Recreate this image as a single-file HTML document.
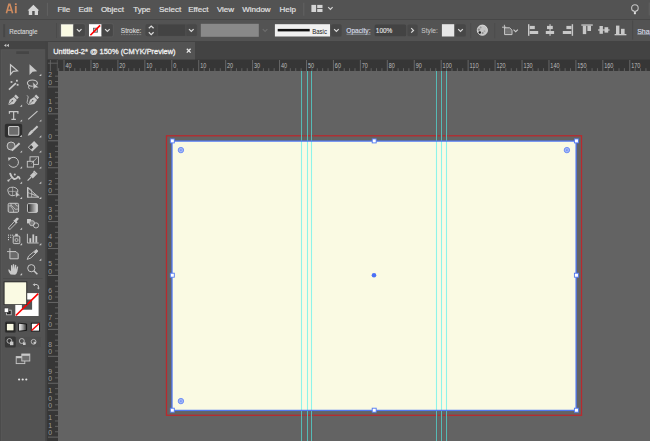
<!DOCTYPE html>
<html><head><meta charset="utf-8">
<style>
*{margin:0;padding:0}
html,body{width:650px;height:441px;overflow:hidden;background:#636363}
svg{position:absolute;left:0;top:0;display:block}
text{font-family:"Liberation Sans", sans-serif}
</style></head><body>
<svg width="650" height="441" viewBox="0 0 650 441">
<rect x="0" y="0" width="650" height="441" fill="#434343"/>
<rect x="0" y="0" width="650" height="19" fill="#535353"/>
<rect x="0" y="19" width="650" height="1" fill="#474747"/>
<rect x="0" y="20" width="650" height="21" fill="#535353"/>
<rect x="48" y="42" width="147" height="18" fill="#535353"/>
<rect x="0" y="41" width="45.6" height="8" fill="#444444"/>
<rect x="0" y="49" width="45.5" height="392" fill="#4a4a4a"/>
<rect x="1" y="49.5" width="44" height="391.5" fill="#535353"/>
<path d="M1.3,441 L1.3,49.8 L44.7,49.8" fill="none" stroke="#5a5a5a" stroke-width="0.6"/>
<rect x="48" y="59.6" width="602" height="11.4" fill="#363636"/>
<rect x="47.2" y="59.6" width="10.8" height="381.4" fill="#363636"/>
<rect x="58" y="71" width="592" height="370" fill="#636363"/>
<g fill="none" stroke="#d08c60" stroke-width="1.55" stroke-linejoin="miter"><path d="M6.4,13.2 L8.9,4.2 L9.9,4.2 L12.6,13.2"/><path d="M7.6,10.2 L11.5,10.2" stroke-width="1.4"/></g>
<rect x="14.9" y="6" width="1.8" height="7.2" fill="#d08c60"/>
<rect x="14.9" y="3.3" width="1.8" height="1.8" fill="#d08c60"/>
<path d="M33.4,4.8 L39.2,10.6 L38,10.6 L38,14.9 L34.7,14.9 L34.7,11 L32.2,11 L32.2,14.9 L28.8,14.9 L28.8,10.6 L27.6,10.6 Z" fill="#d6d6d6"/>
<rect x="46.9" y="2.8" width="1.1" height="13" fill="#606060"/>
<text x="57.4" y="12" font-size="8" fill="#e2e2e2" stroke="#e2e2e2" stroke-width="0.18">File</text>
<text x="78.4" y="12" font-size="8" fill="#e2e2e2" stroke="#e2e2e2" stroke-width="0.18">Edit</text>
<text x="100.9" y="12" font-size="8" fill="#e2e2e2" stroke="#e2e2e2" stroke-width="0.18">Object</text>
<text x="133.20000000000002" y="12" font-size="8" fill="#e2e2e2" stroke="#e2e2e2" stroke-width="0.18">Type</text>
<text x="158.9" y="12" font-size="8" fill="#e2e2e2" stroke="#e2e2e2" stroke-width="0.18">Select</text>
<text x="188.20000000000002" y="12" font-size="8" fill="#e2e2e2" stroke="#e2e2e2" stroke-width="0.18">Effect</text>
<text x="216.9" y="12" font-size="8" fill="#e2e2e2" stroke="#e2e2e2" stroke-width="0.18">View</text>
<text x="242.20000000000002" y="12" font-size="8" fill="#e2e2e2" stroke="#e2e2e2" stroke-width="0.18">Window</text>
<text x="279.59999999999997" y="12" font-size="8" fill="#e2e2e2" stroke="#e2e2e2" stroke-width="0.18">Help</text>
<rect x="303.2" y="2.8" width="1.1" height="13" fill="#606060"/>
<rect x="311.4" y="4.9" width="4.7" height="7.1" fill="#d4d4d4"/>
<rect x="317.2" y="4.9" width="5.3" height="3.1" fill="#d4d4d4"/>
<rect x="317.2" y="8.9" width="5.3" height="3.1" fill="#d4d4d4"/>
<path d="M328.2,7.2 L330.4,9.4 L332.6,7.2" fill="none" stroke="#d4d4d4" stroke-width="1.2"/>
<circle cx="634.9" cy="8" r="3.3" fill="none" stroke="#c4c4c4" stroke-width="1.1"/>
<path d="M633.4,10.6 L634.9,13.8 L636.4,10.6" fill="#535353" stroke="#535353" stroke-width="1"/>
<path d="M632.9,10.3 L634.9,12.2 L636.9,10.3" fill="none" stroke="#c4c4c4" stroke-width="1.1"/>
<rect x="633.9" y="12.2" width="2" height="2" fill="#e0e0e0"/>
<rect x="648.6" y="2.5" width="1.4" height="13" fill="#5c5c5c"/>
<rect x="3.2" y="24.2" width="1.9" height="12.9" fill="#474747"/>
<text x="9.2" y="33.7" font-size="7" fill="#d4d4d4" stroke="#d4d4d4" stroke-width="0.15" textLength="28.2" lengthAdjust="spacingAndGlyphs">Rectangle</text>
<rect x="56" y="23" width="0.8" height="15" fill="#4a4a4a"/>
<rect x="59.6" y="23.3" width="25.6" height="13.9" rx="2" fill="none" stroke="#5c5c5c" stroke-width="0.6"/>
<rect x="88.2" y="23.3" width="25.2" height="13.9" rx="2" fill="none" stroke="#5c5c5c" stroke-width="0.6"/>
<rect x="61.3" y="24.8" width="11.6" height="11.3" fill="#fafae3" stroke="#fdfdf2" stroke-width="0.8"/>
<rect x="73.6" y="24.3" width="11.2" height="12" rx="1.5" fill="#474747"/>
<path d="M76.9,29.1 L79.2,31.4 L81.5,29.1" fill="none" stroke="#dcdcdc" stroke-width="1.2"/>
<rect x="89" y="24.2" width="12.4" height="12.2" fill="#ffffff"/>
<rect x="93.5" y="28.2" width="4" height="4" fill="#c8c8c8" stroke="#5a5a5a" stroke-width="0.8"/>
<line x1="90.4" y1="35.3" x2="100.1" y2="25.4" stroke="#ff0000" stroke-width="1.6"/>
<rect x="101.9" y="24.2" width="10.9" height="12" rx="1.5" fill="#474747"/>
<path d="M105.1,29.1 L107.4,31.4 L109.7,29.1" fill="none" stroke="#dcdcdc" stroke-width="1.2"/>
<text x="120.8" y="33.4" font-size="7" fill="#d8d8d8" stroke="#d8d8d8" stroke-width="0.15" textLength="20.6" lengthAdjust="spacingAndGlyphs">Stroke:</text>
<line x1="121" y1="34.6" x2="141.5" y2="34.6" stroke="#a0a0a0" stroke-width="0.7" stroke-dasharray="1,0.6"/>
<rect x="145.2" y="23.8" width="52.4" height="12.8" rx="2" fill="#4c4c4c" stroke="#595959" stroke-width="0.5"/>
<rect x="145.7" y="24.3" width="11" height="11.9" rx="1.5" fill="#484848"/>
<path d="M148.8,28.3 L151.2,26 L153.6,28.3" fill="none" stroke="#dcdcdc" stroke-width="1.2"/>
<path d="M148.8,32.3 L151.2,34.6 L153.6,32.3" fill="none" stroke="#dcdcdc" stroke-width="1.2"/>
<rect x="158.2" y="24.7" width="26.8" height="11.1" fill="#434343"/>
<rect x="186.6" y="24.5" width="10" height="11.6" rx="1.5" fill="#484848"/>
<path d="M189,29.2 L191.3,31.5 L193.6,29.2" fill="none" stroke="#dcdcdc" stroke-width="1.2"/>
<rect x="200.8" y="23.8" width="58" height="13" fill="#898989"/>
<path d="M262.8,29.2 L265.1,31.5 L267.4,29.2" fill="none" stroke="#6c6c6c" stroke-width="1.2"/>
<rect x="274.9" y="24.2" width="55.1" height="12.3" fill="#f0f0f0"/>
<rect x="277.7" y="28.9" width="32" height="2.5" fill="#111111"/>
<text x="312.2" y="33.5" font-size="6.5" fill="#222222" textLength="14.8" lengthAdjust="spacingAndGlyphs">Basic</text>
<rect x="331.2" y="24.2" width="10.4" height="12.2" rx="1.5" fill="#474747"/>
<path d="M334.1,29.2 L336.4,31.5 L338.7,29.2" fill="none" stroke="#dcdcdc" stroke-width="1.2"/>
<text x="346.3" y="33.4" font-size="7" fill="#d8dee8" stroke="#d8dee8" stroke-width="0.15" textLength="24.2" lengthAdjust="spacingAndGlyphs">Opacity:</text>
<line x1="346.5" y1="34.2" x2="370.5" y2="34.2" stroke="#a8b0bc" stroke-width="0.7"/>
<rect x="374.6" y="24.5" width="31.6" height="11.7" rx="1.5" fill="#434343"/>
<text x="375.8" y="33.3" font-size="6.8" fill="#e4e4e4" stroke="#e4e4e4" stroke-width="0.12" textLength="16.5" lengthAdjust="spacingAndGlyphs">100%</text>
<rect x="407.4" y="24.5" width="10.3" height="11.7" rx="1.5" fill="#484848"/>
<path d="M411.2,28.1 L413.5,30.4 L411.2,32.7" fill="none" stroke="#dcdcdc" stroke-width="1.2"/>
<text x="421.3" y="33.4" font-size="7" fill="#c2c2c2" stroke="#c2c2c2" stroke-width="0.08" textLength="16.6" lengthAdjust="spacingAndGlyphs">Style:</text>
<rect x="441.9" y="24.2" width="12.3" height="12.3" fill="#e6e6e6"/>
<rect x="455.2" y="24.3" width="10.6" height="12.1" rx="1.5" fill="#474747"/>
<path d="M458.2,29.2 L460.5,31.5 L462.8,29.2" fill="none" stroke="#dcdcdc" stroke-width="1.2"/>
<rect x="470.4" y="23" width="0.8" height="15.2" fill="#4a4a4a"/>
<circle cx="482.35" cy="30.2" r="5.1" fill="#c4c4c4" stroke="#dedede" stroke-width="0.9"/>
<circle cx="478.9" cy="29.6" r="1.2" fill="#8a8a8a"/>
<circle cx="480.6" cy="27.4" r="1" fill="#9a9a9a"/>
<circle cx="482.6" cy="32.9" r="1" fill="#8a8a8a"/>
<circle cx="479.8" cy="32.5" r="1.2" fill="#1e1e1e"/>
<circle cx="484.4" cy="31.2" r="0.9" fill="#a6a6a6"/>
<rect x="494.4" y="23" width="0.8" height="15.2" fill="#4a4a4a"/>
<path d="M504.6,27.8 L509.6,27.8 L512,30.2 L512,34.6 L504.6,34.6 Z" fill="#6e6e6e" stroke="#cacaca" stroke-width="1"/>
<path d="M505.4,30 L511.2,30 M505.4,31.4 L511.2,31.4 M505.4,32.8 L511.2,32.8" stroke="#7c7c7c" stroke-width="0.5"/>
<path d="M504.4,24.8 L504.4,28.8 M502,27.2 L506.2,27.2" stroke="#cacaca" stroke-width="0.9"/>
<path d="M513.5,29.6 L515.7,31.7 L517.9,29.6" fill="none" stroke="#cacaca" stroke-width="1.1"/>
<rect x="528" y="24.2" width="1.4" height="11.6" fill="#c8c8c8"/>
<rect x="529.7" y="25.9" width="5.1" height="3.2" fill="#c8c8c8"/>
<rect x="529.7" y="31" width="8.5" height="3" fill="#c8c8c8"/>
<rect x="549.5" y="24.2" width="1.1" height="11.6" fill="#c8c8c8"/>
<rect x="547" y="25.9" width="5.8" height="3.2" fill="#c8c8c8"/>
<rect x="545.8" y="31" width="8.3" height="3" fill="#c8c8c8"/>
<rect x="571.7" y="24.2" width="1.4" height="11.6" fill="#c8c8c8"/>
<rect x="566.4" y="25.9" width="5.1" height="3.2" fill="#c8c8c8"/>
<rect x="562.8" y="31" width="8.5" height="3" fill="#c8c8c8"/>
<rect x="581.3" y="24.4" width="11.5" height="1.3" fill="#c8c8c8"/>
<rect x="582.8" y="25.7" width="3.4" height="8.4" fill="#c8c8c8"/>
<rect x="587.4" y="25.7" width="3.6" height="5.3" fill="#c8c8c8"/>
<rect x="598" y="29.4" width="11.6" height="1.2" fill="#c8c8c8"/>
<rect x="599.5" y="26" width="3.4" height="7.8" fill="#c8c8c8"/>
<rect x="604.5" y="27.2" width="3.7" height="5.4" fill="#c8c8c8"/>
<rect x="614.6" y="34" width="11.8" height="1.3" fill="#c8c8c8"/>
<rect x="616" y="25.6" width="3.4" height="8.4" fill="#c8c8c8"/>
<rect x="621" y="28.8" width="3.6" height="5.2" fill="#c8c8c8"/>
<rect x="632.2" y="20.4" width="0.9" height="19.2" fill="#494949"/>
<text x="637.2" y="33.5" font-size="7" fill="#d8dee8" stroke="#d8dee8" stroke-width="0.15">Shape:</text>
<line x1="637.4" y1="34.3" x2="650" y2="34.3" stroke="#a8b0bc" stroke-width="0.7"/>
<text x="53.2" y="53.8" font-size="7.5" fill="#f0f0f0" stroke="#f0f0f0" stroke-width="0.28" textLength="122.4" lengthAdjust="spacingAndGlyphs">Untitled-2* @ 150% (CMYK/Preview)</text>
<path d="M186.8,48.8 L190.6,52.6 M190.6,48.8 L186.8,52.6" stroke="#e8e8e8" stroke-width="1.3"/>
<path d="M4,45.4 L6.3,43.8 L6.3,47 Z M6.6,45.4 L8.9,43.8 L8.9,47 Z" fill="#c8c8c8"/>
<rect x="16.3" y="51.3" width="12.7" height="2.7" fill="#454545"/>
<line x1="50.4" y1="60" x2="50.4" y2="71" stroke="#6a6a6a" stroke-width="0.8"/>
<line x1="48" y1="63.2" x2="58" y2="63.2" stroke="#6a6a6a" stroke-width="0.8"/>
<line x1="57.3" y1="60" x2="57.3" y2="71" stroke="#5a5a5a" stroke-width="0.8"/>
<line x1="58.65" y1="68.2" x2="58.65" y2="71" stroke="#6c6c6c" stroke-width="0.8"/>
<line x1="64.04" y1="60" x2="64.04" y2="71" stroke="#6c6c6c" stroke-width="0.9"/>
<text x="65.44" y="67.8" font-size="7" fill="#bcbcbc" textLength="6.10" lengthAdjust="spacingAndGlyphs">40</text>
<line x1="69.43" y1="68.2" x2="69.43" y2="71" stroke="#6c6c6c" stroke-width="0.8"/>
<line x1="74.82" y1="68.2" x2="74.82" y2="71" stroke="#6c6c6c" stroke-width="0.8"/>
<line x1="80.20" y1="68.2" x2="80.20" y2="71" stroke="#6c6c6c" stroke-width="0.8"/>
<line x1="85.59" y1="68.2" x2="85.59" y2="71" stroke="#6c6c6c" stroke-width="0.8"/>
<line x1="90.98" y1="60" x2="90.98" y2="71" stroke="#6c6c6c" stroke-width="0.9"/>
<text x="92.38" y="67.8" font-size="7" fill="#bcbcbc" textLength="6.10" lengthAdjust="spacingAndGlyphs">30</text>
<line x1="96.37" y1="68.2" x2="96.37" y2="71" stroke="#6c6c6c" stroke-width="0.8"/>
<line x1="101.76" y1="68.2" x2="101.76" y2="71" stroke="#6c6c6c" stroke-width="0.8"/>
<line x1="107.14" y1="68.2" x2="107.14" y2="71" stroke="#6c6c6c" stroke-width="0.8"/>
<line x1="112.53" y1="68.2" x2="112.53" y2="71" stroke="#6c6c6c" stroke-width="0.8"/>
<line x1="117.92" y1="60" x2="117.92" y2="71" stroke="#6c6c6c" stroke-width="0.9"/>
<text x="119.32" y="67.8" font-size="7" fill="#bcbcbc" textLength="6.10" lengthAdjust="spacingAndGlyphs">20</text>
<line x1="123.31" y1="68.2" x2="123.31" y2="71" stroke="#6c6c6c" stroke-width="0.8"/>
<line x1="128.70" y1="68.2" x2="128.70" y2="71" stroke="#6c6c6c" stroke-width="0.8"/>
<line x1="134.08" y1="68.2" x2="134.08" y2="71" stroke="#6c6c6c" stroke-width="0.8"/>
<line x1="139.47" y1="68.2" x2="139.47" y2="71" stroke="#6c6c6c" stroke-width="0.8"/>
<line x1="144.86" y1="60" x2="144.86" y2="71" stroke="#6c6c6c" stroke-width="0.9"/>
<text x="146.26" y="67.8" font-size="7" fill="#bcbcbc" textLength="6.10" lengthAdjust="spacingAndGlyphs">10</text>
<line x1="150.25" y1="68.2" x2="150.25" y2="71" stroke="#6c6c6c" stroke-width="0.8"/>
<line x1="155.64" y1="68.2" x2="155.64" y2="71" stroke="#6c6c6c" stroke-width="0.8"/>
<line x1="161.02" y1="68.2" x2="161.02" y2="71" stroke="#6c6c6c" stroke-width="0.8"/>
<line x1="166.41" y1="68.2" x2="166.41" y2="71" stroke="#6c6c6c" stroke-width="0.8"/>
<line x1="171.80" y1="60" x2="171.80" y2="71" stroke="#6c6c6c" stroke-width="0.9"/>
<text x="173.20" y="67.8" font-size="7" fill="#bcbcbc" textLength="3.05" lengthAdjust="spacingAndGlyphs">0</text>
<line x1="177.19" y1="68.2" x2="177.19" y2="71" stroke="#6c6c6c" stroke-width="0.8"/>
<line x1="182.58" y1="68.2" x2="182.58" y2="71" stroke="#6c6c6c" stroke-width="0.8"/>
<line x1="187.96" y1="68.2" x2="187.96" y2="71" stroke="#6c6c6c" stroke-width="0.8"/>
<line x1="193.35" y1="68.2" x2="193.35" y2="71" stroke="#6c6c6c" stroke-width="0.8"/>
<line x1="198.74" y1="60" x2="198.74" y2="71" stroke="#6c6c6c" stroke-width="0.9"/>
<text x="200.14" y="67.8" font-size="7" fill="#bcbcbc" textLength="6.10" lengthAdjust="spacingAndGlyphs">10</text>
<line x1="204.13" y1="68.2" x2="204.13" y2="71" stroke="#6c6c6c" stroke-width="0.8"/>
<line x1="209.52" y1="68.2" x2="209.52" y2="71" stroke="#6c6c6c" stroke-width="0.8"/>
<line x1="214.90" y1="68.2" x2="214.90" y2="71" stroke="#6c6c6c" stroke-width="0.8"/>
<line x1="220.29" y1="68.2" x2="220.29" y2="71" stroke="#6c6c6c" stroke-width="0.8"/>
<line x1="225.68" y1="60" x2="225.68" y2="71" stroke="#6c6c6c" stroke-width="0.9"/>
<text x="227.08" y="67.8" font-size="7" fill="#bcbcbc" textLength="6.10" lengthAdjust="spacingAndGlyphs">20</text>
<line x1="231.07" y1="68.2" x2="231.07" y2="71" stroke="#6c6c6c" stroke-width="0.8"/>
<line x1="236.46" y1="68.2" x2="236.46" y2="71" stroke="#6c6c6c" stroke-width="0.8"/>
<line x1="241.84" y1="68.2" x2="241.84" y2="71" stroke="#6c6c6c" stroke-width="0.8"/>
<line x1="247.23" y1="68.2" x2="247.23" y2="71" stroke="#6c6c6c" stroke-width="0.8"/>
<line x1="252.62" y1="60" x2="252.62" y2="71" stroke="#6c6c6c" stroke-width="0.9"/>
<text x="254.02" y="67.8" font-size="7" fill="#bcbcbc" textLength="6.10" lengthAdjust="spacingAndGlyphs">30</text>
<line x1="258.01" y1="68.2" x2="258.01" y2="71" stroke="#6c6c6c" stroke-width="0.8"/>
<line x1="263.40" y1="68.2" x2="263.40" y2="71" stroke="#6c6c6c" stroke-width="0.8"/>
<line x1="268.78" y1="68.2" x2="268.78" y2="71" stroke="#6c6c6c" stroke-width="0.8"/>
<line x1="274.17" y1="68.2" x2="274.17" y2="71" stroke="#6c6c6c" stroke-width="0.8"/>
<line x1="279.56" y1="60" x2="279.56" y2="71" stroke="#6c6c6c" stroke-width="0.9"/>
<text x="280.96" y="67.8" font-size="7" fill="#bcbcbc" textLength="6.10" lengthAdjust="spacingAndGlyphs">40</text>
<line x1="284.95" y1="68.2" x2="284.95" y2="71" stroke="#6c6c6c" stroke-width="0.8"/>
<line x1="290.34" y1="68.2" x2="290.34" y2="71" stroke="#6c6c6c" stroke-width="0.8"/>
<line x1="295.72" y1="68.2" x2="295.72" y2="71" stroke="#6c6c6c" stroke-width="0.8"/>
<line x1="301.11" y1="68.2" x2="301.11" y2="71" stroke="#6c6c6c" stroke-width="0.8"/>
<line x1="306.50" y1="60" x2="306.50" y2="71" stroke="#6c6c6c" stroke-width="0.9"/>
<text x="307.90" y="67.8" font-size="7" fill="#bcbcbc" textLength="6.10" lengthAdjust="spacingAndGlyphs">50</text>
<line x1="311.89" y1="68.2" x2="311.89" y2="71" stroke="#6c6c6c" stroke-width="0.8"/>
<line x1="317.28" y1="68.2" x2="317.28" y2="71" stroke="#6c6c6c" stroke-width="0.8"/>
<line x1="322.66" y1="68.2" x2="322.66" y2="71" stroke="#6c6c6c" stroke-width="0.8"/>
<line x1="328.05" y1="68.2" x2="328.05" y2="71" stroke="#6c6c6c" stroke-width="0.8"/>
<line x1="333.44" y1="60" x2="333.44" y2="71" stroke="#6c6c6c" stroke-width="0.9"/>
<text x="334.84" y="67.8" font-size="7" fill="#bcbcbc" textLength="6.10" lengthAdjust="spacingAndGlyphs">60</text>
<line x1="338.83" y1="68.2" x2="338.83" y2="71" stroke="#6c6c6c" stroke-width="0.8"/>
<line x1="344.22" y1="68.2" x2="344.22" y2="71" stroke="#6c6c6c" stroke-width="0.8"/>
<line x1="349.60" y1="68.2" x2="349.60" y2="71" stroke="#6c6c6c" stroke-width="0.8"/>
<line x1="354.99" y1="68.2" x2="354.99" y2="71" stroke="#6c6c6c" stroke-width="0.8"/>
<line x1="360.38" y1="60" x2="360.38" y2="71" stroke="#6c6c6c" stroke-width="0.9"/>
<text x="361.78" y="67.8" font-size="7" fill="#bcbcbc" textLength="6.10" lengthAdjust="spacingAndGlyphs">70</text>
<line x1="365.77" y1="68.2" x2="365.77" y2="71" stroke="#6c6c6c" stroke-width="0.8"/>
<line x1="371.16" y1="68.2" x2="371.16" y2="71" stroke="#6c6c6c" stroke-width="0.8"/>
<line x1="376.54" y1="68.2" x2="376.54" y2="71" stroke="#6c6c6c" stroke-width="0.8"/>
<line x1="381.93" y1="68.2" x2="381.93" y2="71" stroke="#6c6c6c" stroke-width="0.8"/>
<line x1="387.32" y1="60" x2="387.32" y2="71" stroke="#6c6c6c" stroke-width="0.9"/>
<text x="388.72" y="67.8" font-size="7" fill="#bcbcbc" textLength="6.10" lengthAdjust="spacingAndGlyphs">80</text>
<line x1="392.71" y1="68.2" x2="392.71" y2="71" stroke="#6c6c6c" stroke-width="0.8"/>
<line x1="398.10" y1="68.2" x2="398.10" y2="71" stroke="#6c6c6c" stroke-width="0.8"/>
<line x1="403.48" y1="68.2" x2="403.48" y2="71" stroke="#6c6c6c" stroke-width="0.8"/>
<line x1="408.87" y1="68.2" x2="408.87" y2="71" stroke="#6c6c6c" stroke-width="0.8"/>
<line x1="414.26" y1="60" x2="414.26" y2="71" stroke="#6c6c6c" stroke-width="0.9"/>
<text x="415.66" y="67.8" font-size="7" fill="#bcbcbc" textLength="6.10" lengthAdjust="spacingAndGlyphs">90</text>
<line x1="419.65" y1="68.2" x2="419.65" y2="71" stroke="#6c6c6c" stroke-width="0.8"/>
<line x1="425.04" y1="68.2" x2="425.04" y2="71" stroke="#6c6c6c" stroke-width="0.8"/>
<line x1="430.42" y1="68.2" x2="430.42" y2="71" stroke="#6c6c6c" stroke-width="0.8"/>
<line x1="435.81" y1="68.2" x2="435.81" y2="71" stroke="#6c6c6c" stroke-width="0.8"/>
<line x1="441.20" y1="60" x2="441.20" y2="71" stroke="#6c6c6c" stroke-width="0.9"/>
<text x="442.60" y="67.8" font-size="7" fill="#bcbcbc" textLength="9.15" lengthAdjust="spacingAndGlyphs">100</text>
<line x1="446.59" y1="68.2" x2="446.59" y2="71" stroke="#6c6c6c" stroke-width="0.8"/>
<line x1="451.98" y1="68.2" x2="451.98" y2="71" stroke="#6c6c6c" stroke-width="0.8"/>
<line x1="457.36" y1="68.2" x2="457.36" y2="71" stroke="#6c6c6c" stroke-width="0.8"/>
<line x1="462.75" y1="68.2" x2="462.75" y2="71" stroke="#6c6c6c" stroke-width="0.8"/>
<line x1="468.14" y1="60" x2="468.14" y2="71" stroke="#6c6c6c" stroke-width="0.9"/>
<text x="469.54" y="67.8" font-size="7" fill="#bcbcbc" textLength="9.15" lengthAdjust="spacingAndGlyphs">110</text>
<line x1="473.53" y1="68.2" x2="473.53" y2="71" stroke="#6c6c6c" stroke-width="0.8"/>
<line x1="478.92" y1="68.2" x2="478.92" y2="71" stroke="#6c6c6c" stroke-width="0.8"/>
<line x1="484.30" y1="68.2" x2="484.30" y2="71" stroke="#6c6c6c" stroke-width="0.8"/>
<line x1="489.69" y1="68.2" x2="489.69" y2="71" stroke="#6c6c6c" stroke-width="0.8"/>
<line x1="495.08" y1="60" x2="495.08" y2="71" stroke="#6c6c6c" stroke-width="0.9"/>
<text x="496.48" y="67.8" font-size="7" fill="#bcbcbc" textLength="9.15" lengthAdjust="spacingAndGlyphs">120</text>
<line x1="500.47" y1="68.2" x2="500.47" y2="71" stroke="#6c6c6c" stroke-width="0.8"/>
<line x1="505.86" y1="68.2" x2="505.86" y2="71" stroke="#6c6c6c" stroke-width="0.8"/>
<line x1="511.24" y1="68.2" x2="511.24" y2="71" stroke="#6c6c6c" stroke-width="0.8"/>
<line x1="516.63" y1="68.2" x2="516.63" y2="71" stroke="#6c6c6c" stroke-width="0.8"/>
<line x1="522.02" y1="60" x2="522.02" y2="71" stroke="#6c6c6c" stroke-width="0.9"/>
<text x="523.42" y="67.8" font-size="7" fill="#bcbcbc" textLength="9.15" lengthAdjust="spacingAndGlyphs">130</text>
<line x1="527.41" y1="68.2" x2="527.41" y2="71" stroke="#6c6c6c" stroke-width="0.8"/>
<line x1="532.80" y1="68.2" x2="532.80" y2="71" stroke="#6c6c6c" stroke-width="0.8"/>
<line x1="538.18" y1="68.2" x2="538.18" y2="71" stroke="#6c6c6c" stroke-width="0.8"/>
<line x1="543.57" y1="68.2" x2="543.57" y2="71" stroke="#6c6c6c" stroke-width="0.8"/>
<line x1="548.96" y1="60" x2="548.96" y2="71" stroke="#6c6c6c" stroke-width="0.9"/>
<text x="550.36" y="67.8" font-size="7" fill="#bcbcbc" textLength="9.15" lengthAdjust="spacingAndGlyphs">140</text>
<line x1="554.35" y1="68.2" x2="554.35" y2="71" stroke="#6c6c6c" stroke-width="0.8"/>
<line x1="559.74" y1="68.2" x2="559.74" y2="71" stroke="#6c6c6c" stroke-width="0.8"/>
<line x1="565.12" y1="68.2" x2="565.12" y2="71" stroke="#6c6c6c" stroke-width="0.8"/>
<line x1="570.51" y1="68.2" x2="570.51" y2="71" stroke="#6c6c6c" stroke-width="0.8"/>
<line x1="575.90" y1="60" x2="575.90" y2="71" stroke="#6c6c6c" stroke-width="0.9"/>
<text x="577.30" y="67.8" font-size="7" fill="#bcbcbc" textLength="9.15" lengthAdjust="spacingAndGlyphs">150</text>
<line x1="581.29" y1="68.2" x2="581.29" y2="71" stroke="#6c6c6c" stroke-width="0.8"/>
<line x1="586.68" y1="68.2" x2="586.68" y2="71" stroke="#6c6c6c" stroke-width="0.8"/>
<line x1="592.06" y1="68.2" x2="592.06" y2="71" stroke="#6c6c6c" stroke-width="0.8"/>
<line x1="597.45" y1="68.2" x2="597.45" y2="71" stroke="#6c6c6c" stroke-width="0.8"/>
<line x1="602.84" y1="60" x2="602.84" y2="71" stroke="#6c6c6c" stroke-width="0.9"/>
<text x="604.24" y="67.8" font-size="7" fill="#bcbcbc" textLength="9.15" lengthAdjust="spacingAndGlyphs">160</text>
<line x1="608.23" y1="68.2" x2="608.23" y2="71" stroke="#6c6c6c" stroke-width="0.8"/>
<line x1="613.62" y1="68.2" x2="613.62" y2="71" stroke="#6c6c6c" stroke-width="0.8"/>
<line x1="619.00" y1="68.2" x2="619.00" y2="71" stroke="#6c6c6c" stroke-width="0.8"/>
<line x1="624.39" y1="68.2" x2="624.39" y2="71" stroke="#6c6c6c" stroke-width="0.8"/>
<line x1="629.78" y1="60" x2="629.78" y2="71" stroke="#6c6c6c" stroke-width="0.9"/>
<text x="631.18" y="67.8" font-size="7" fill="#bcbcbc" textLength="9.15" lengthAdjust="spacingAndGlyphs">170</text>
<line x1="635.17" y1="68.2" x2="635.17" y2="71" stroke="#6c6c6c" stroke-width="0.8"/>
<line x1="640.56" y1="68.2" x2="640.56" y2="71" stroke="#6c6c6c" stroke-width="0.8"/>
<line x1="645.94" y1="68.2" x2="645.94" y2="71" stroke="#6c6c6c" stroke-width="0.8"/>
<line x1="55" y1="76.14" x2="58" y2="76.14" stroke="#6c6c6c" stroke-width="0.8"/>
<line x1="55" y1="81.53" x2="58" y2="81.53" stroke="#6c6c6c" stroke-width="0.8"/>
<line x1="48" y1="86.92" x2="58" y2="86.92" stroke="#6c6c6c" stroke-width="0.9"/>
<text x="50.1" y="84.92" font-size="6.8" fill="#9c9c9c" text-anchor="middle">0</text>
<text x="50.1" y="77.42" font-size="6.8" fill="#9c9c9c" text-anchor="middle">2</text>
<line x1="55" y1="92.31" x2="58" y2="92.31" stroke="#6c6c6c" stroke-width="0.8"/>
<line x1="55" y1="97.70" x2="58" y2="97.70" stroke="#6c6c6c" stroke-width="0.8"/>
<line x1="55" y1="103.08" x2="58" y2="103.08" stroke="#6c6c6c" stroke-width="0.8"/>
<line x1="55" y1="108.47" x2="58" y2="108.47" stroke="#6c6c6c" stroke-width="0.8"/>
<line x1="48" y1="113.86" x2="58" y2="113.86" stroke="#6c6c6c" stroke-width="0.9"/>
<text x="50.1" y="111.86" font-size="6.8" fill="#9c9c9c" text-anchor="middle">0</text>
<text x="50.1" y="104.36" font-size="6.8" fill="#9c9c9c" text-anchor="middle">1</text>
<line x1="55" y1="119.25" x2="58" y2="119.25" stroke="#6c6c6c" stroke-width="0.8"/>
<line x1="55" y1="124.64" x2="58" y2="124.64" stroke="#6c6c6c" stroke-width="0.8"/>
<line x1="55" y1="130.02" x2="58" y2="130.02" stroke="#6c6c6c" stroke-width="0.8"/>
<line x1="55" y1="135.41" x2="58" y2="135.41" stroke="#6c6c6c" stroke-width="0.8"/>
<line x1="48" y1="140.80" x2="58" y2="140.80" stroke="#6c6c6c" stroke-width="0.9"/>
<text x="50.1" y="138.80" font-size="6.8" fill="#9c9c9c" text-anchor="middle">0</text>
<line x1="55" y1="146.19" x2="58" y2="146.19" stroke="#6c6c6c" stroke-width="0.8"/>
<line x1="55" y1="151.58" x2="58" y2="151.58" stroke="#6c6c6c" stroke-width="0.8"/>
<line x1="55" y1="156.96" x2="58" y2="156.96" stroke="#6c6c6c" stroke-width="0.8"/>
<line x1="55" y1="162.35" x2="58" y2="162.35" stroke="#6c6c6c" stroke-width="0.8"/>
<line x1="48" y1="167.74" x2="58" y2="167.74" stroke="#6c6c6c" stroke-width="0.9"/>
<text x="50.1" y="165.74" font-size="6.8" fill="#9c9c9c" text-anchor="middle">0</text>
<text x="50.1" y="158.24" font-size="6.8" fill="#9c9c9c" text-anchor="middle">1</text>
<line x1="55" y1="173.13" x2="58" y2="173.13" stroke="#6c6c6c" stroke-width="0.8"/>
<line x1="55" y1="178.52" x2="58" y2="178.52" stroke="#6c6c6c" stroke-width="0.8"/>
<line x1="55" y1="183.90" x2="58" y2="183.90" stroke="#6c6c6c" stroke-width="0.8"/>
<line x1="55" y1="189.29" x2="58" y2="189.29" stroke="#6c6c6c" stroke-width="0.8"/>
<line x1="48" y1="194.68" x2="58" y2="194.68" stroke="#6c6c6c" stroke-width="0.9"/>
<text x="50.1" y="192.68" font-size="6.8" fill="#9c9c9c" text-anchor="middle">0</text>
<text x="50.1" y="185.18" font-size="6.8" fill="#9c9c9c" text-anchor="middle">2</text>
<line x1="55" y1="200.07" x2="58" y2="200.07" stroke="#6c6c6c" stroke-width="0.8"/>
<line x1="55" y1="205.46" x2="58" y2="205.46" stroke="#6c6c6c" stroke-width="0.8"/>
<line x1="55" y1="210.84" x2="58" y2="210.84" stroke="#6c6c6c" stroke-width="0.8"/>
<line x1="55" y1="216.23" x2="58" y2="216.23" stroke="#6c6c6c" stroke-width="0.8"/>
<line x1="48" y1="221.62" x2="58" y2="221.62" stroke="#6c6c6c" stroke-width="0.9"/>
<text x="50.1" y="219.62" font-size="6.8" fill="#9c9c9c" text-anchor="middle">0</text>
<text x="50.1" y="212.12" font-size="6.8" fill="#9c9c9c" text-anchor="middle">3</text>
<line x1="55" y1="227.01" x2="58" y2="227.01" stroke="#6c6c6c" stroke-width="0.8"/>
<line x1="55" y1="232.40" x2="58" y2="232.40" stroke="#6c6c6c" stroke-width="0.8"/>
<line x1="55" y1="237.78" x2="58" y2="237.78" stroke="#6c6c6c" stroke-width="0.8"/>
<line x1="55" y1="243.17" x2="58" y2="243.17" stroke="#6c6c6c" stroke-width="0.8"/>
<line x1="48" y1="248.56" x2="58" y2="248.56" stroke="#6c6c6c" stroke-width="0.9"/>
<text x="50.1" y="246.56" font-size="6.8" fill="#9c9c9c" text-anchor="middle">0</text>
<text x="50.1" y="239.06" font-size="6.8" fill="#9c9c9c" text-anchor="middle">4</text>
<line x1="55" y1="253.95" x2="58" y2="253.95" stroke="#6c6c6c" stroke-width="0.8"/>
<line x1="55" y1="259.34" x2="58" y2="259.34" stroke="#6c6c6c" stroke-width="0.8"/>
<line x1="55" y1="264.72" x2="58" y2="264.72" stroke="#6c6c6c" stroke-width="0.8"/>
<line x1="55" y1="270.11" x2="58" y2="270.11" stroke="#6c6c6c" stroke-width="0.8"/>
<line x1="48" y1="275.50" x2="58" y2="275.50" stroke="#6c6c6c" stroke-width="0.9"/>
<text x="50.1" y="273.50" font-size="6.8" fill="#9c9c9c" text-anchor="middle">0</text>
<text x="50.1" y="266.00" font-size="6.8" fill="#9c9c9c" text-anchor="middle">5</text>
<line x1="55" y1="280.89" x2="58" y2="280.89" stroke="#6c6c6c" stroke-width="0.8"/>
<line x1="55" y1="286.28" x2="58" y2="286.28" stroke="#6c6c6c" stroke-width="0.8"/>
<line x1="55" y1="291.66" x2="58" y2="291.66" stroke="#6c6c6c" stroke-width="0.8"/>
<line x1="55" y1="297.05" x2="58" y2="297.05" stroke="#6c6c6c" stroke-width="0.8"/>
<line x1="48" y1="302.44" x2="58" y2="302.44" stroke="#6c6c6c" stroke-width="0.9"/>
<text x="50.1" y="300.44" font-size="6.8" fill="#9c9c9c" text-anchor="middle">0</text>
<text x="50.1" y="292.94" font-size="6.8" fill="#9c9c9c" text-anchor="middle">6</text>
<line x1="55" y1="307.83" x2="58" y2="307.83" stroke="#6c6c6c" stroke-width="0.8"/>
<line x1="55" y1="313.22" x2="58" y2="313.22" stroke="#6c6c6c" stroke-width="0.8"/>
<line x1="55" y1="318.60" x2="58" y2="318.60" stroke="#6c6c6c" stroke-width="0.8"/>
<line x1="55" y1="323.99" x2="58" y2="323.99" stroke="#6c6c6c" stroke-width="0.8"/>
<line x1="48" y1="329.38" x2="58" y2="329.38" stroke="#6c6c6c" stroke-width="0.9"/>
<text x="50.1" y="327.38" font-size="6.8" fill="#9c9c9c" text-anchor="middle">0</text>
<text x="50.1" y="319.88" font-size="6.8" fill="#9c9c9c" text-anchor="middle">7</text>
<line x1="55" y1="334.77" x2="58" y2="334.77" stroke="#6c6c6c" stroke-width="0.8"/>
<line x1="55" y1="340.16" x2="58" y2="340.16" stroke="#6c6c6c" stroke-width="0.8"/>
<line x1="55" y1="345.54" x2="58" y2="345.54" stroke="#6c6c6c" stroke-width="0.8"/>
<line x1="55" y1="350.93" x2="58" y2="350.93" stroke="#6c6c6c" stroke-width="0.8"/>
<line x1="48" y1="356.32" x2="58" y2="356.32" stroke="#6c6c6c" stroke-width="0.9"/>
<text x="50.1" y="354.32" font-size="6.8" fill="#9c9c9c" text-anchor="middle">0</text>
<text x="50.1" y="346.82" font-size="6.8" fill="#9c9c9c" text-anchor="middle">8</text>
<line x1="55" y1="361.71" x2="58" y2="361.71" stroke="#6c6c6c" stroke-width="0.8"/>
<line x1="55" y1="367.10" x2="58" y2="367.10" stroke="#6c6c6c" stroke-width="0.8"/>
<line x1="55" y1="372.48" x2="58" y2="372.48" stroke="#6c6c6c" stroke-width="0.8"/>
<line x1="55" y1="377.87" x2="58" y2="377.87" stroke="#6c6c6c" stroke-width="0.8"/>
<line x1="48" y1="383.26" x2="58" y2="383.26" stroke="#6c6c6c" stroke-width="0.9"/>
<text x="50.1" y="381.26" font-size="6.8" fill="#9c9c9c" text-anchor="middle">0</text>
<text x="50.1" y="373.76" font-size="6.8" fill="#9c9c9c" text-anchor="middle">9</text>
<line x1="55" y1="388.65" x2="58" y2="388.65" stroke="#6c6c6c" stroke-width="0.8"/>
<line x1="55" y1="394.04" x2="58" y2="394.04" stroke="#6c6c6c" stroke-width="0.8"/>
<line x1="55" y1="399.42" x2="58" y2="399.42" stroke="#6c6c6c" stroke-width="0.8"/>
<line x1="55" y1="404.81" x2="58" y2="404.81" stroke="#6c6c6c" stroke-width="0.8"/>
<line x1="48" y1="410.20" x2="58" y2="410.20" stroke="#6c6c6c" stroke-width="0.9"/>
<text x="50.1" y="408.20" font-size="6.8" fill="#9c9c9c" text-anchor="middle">0</text>
<text x="50.1" y="400.70" font-size="6.8" fill="#9c9c9c" text-anchor="middle">0</text>
<text x="50.1" y="393.20" font-size="6.8" fill="#9c9c9c" text-anchor="middle">1</text>
<line x1="55" y1="415.59" x2="58" y2="415.59" stroke="#6c6c6c" stroke-width="0.8"/>
<line x1="55" y1="420.98" x2="58" y2="420.98" stroke="#6c6c6c" stroke-width="0.8"/>
<line x1="55" y1="426.36" x2="58" y2="426.36" stroke="#6c6c6c" stroke-width="0.8"/>
<line x1="55" y1="431.75" x2="58" y2="431.75" stroke="#6c6c6c" stroke-width="0.8"/>
<line x1="48" y1="437.14" x2="58" y2="437.14" stroke="#6c6c6c" stroke-width="0.9"/>
<text x="50.1" y="435.14" font-size="6.8" fill="#9c9c9c" text-anchor="middle">0</text>
<text x="50.1" y="427.64" font-size="6.8" fill="#9c9c9c" text-anchor="middle">1</text>
<text x="50.1" y="420.14" font-size="6.8" fill="#9c9c9c" text-anchor="middle">1</text>
<rect x="172" y="141" width="404" height="269" fill="#fafae3"/>
<rect x="166.5" y="135.8" width="415" height="279.5" fill="none" stroke="#b82a2e" stroke-width="1.3"/>
<path d="M303.5,71 L303.5,141 M303.5,410.5 L303.5,441" stroke="#6a5c5c" stroke-width="1" opacity="0.6"/>
<path d="M305.5,71 L305.5,141 M305.5,410.5 L305.5,441" stroke="#6a5c5c" stroke-width="1" opacity="0.6"/>
<path d="M310.5,71 L310.5,141 M310.5,410.5 L310.5,441" stroke="#6a5c5c" stroke-width="1" opacity="0.6"/>
<path d="M313.5,71 L313.5,141 M313.5,410.5 L313.5,441" stroke="#6a5c5c" stroke-width="1" opacity="0.6"/>
<path d="M437.5,71 L437.5,141 M437.5,410.5 L437.5,441" stroke="#6a5c5c" stroke-width="1" opacity="0.6"/>
<path d="M440.5,71 L440.5,141 M440.5,410.5 L440.5,441" stroke="#6a5c5c" stroke-width="1" opacity="0.6"/>
<path d="M442.5,71 L442.5,141 M442.5,410.5 L442.5,441" stroke="#6a5c5c" stroke-width="1" opacity="0.6"/>
<path d="M445.5,71 L445.5,141 M445.5,410.5 L445.5,441" stroke="#6a5c5c" stroke-width="1" opacity="0.6"/>
<path d="M448.5,71 L448.5,141 M448.5,410.5 L448.5,441" stroke="#6a5c5c" stroke-width="1" opacity="0.6"/>
<line x1="301.5" y1="71" x2="301.5" y2="441" stroke="#55bab6" stroke-width="1"/>
<line x1="301.5" y1="141" x2="301.5" y2="410" stroke="#8ef4ea" stroke-width="1.1"/>
<line x1="307.5" y1="71" x2="307.5" y2="441" stroke="#55bab6" stroke-width="1"/>
<line x1="307.5" y1="141" x2="307.5" y2="410" stroke="#8ef4ea" stroke-width="1.1"/>
<line x1="311.5" y1="71" x2="311.5" y2="441" stroke="#55bab6" stroke-width="1"/>
<line x1="311.5" y1="141" x2="311.5" y2="410" stroke="#8ef4ea" stroke-width="1.1"/>
<line x1="436.5" y1="71" x2="436.5" y2="441" stroke="#55bab6" stroke-width="1"/>
<line x1="436.5" y1="141" x2="436.5" y2="410" stroke="#8ef4ea" stroke-width="1.1"/>
<line x1="441.5" y1="71" x2="441.5" y2="441" stroke="#55bab6" stroke-width="1"/>
<line x1="441.5" y1="141" x2="441.5" y2="410" stroke="#8ef4ea" stroke-width="1.1"/>
<line x1="446.5" y1="71" x2="446.5" y2="441" stroke="#55bab6" stroke-width="1"/>
<line x1="446.5" y1="141" x2="446.5" y2="410" stroke="#8ef4ea" stroke-width="1.1"/>
<rect x="172" y="141.1" width="404.1" height="269.3" fill="none" stroke="#5078f2" stroke-width="1.3"/>
<rect x="170.3" y="138.9" width="4" height="4" fill="#ffffff" stroke="#5078f2" stroke-width="0.9"/>
<rect x="170.3" y="273.2" width="4" height="4" fill="#ffffff" stroke="#5078f2" stroke-width="0.9"/>
<rect x="170.3" y="408.2" width="4" height="4" fill="#ffffff" stroke="#5078f2" stroke-width="0.9"/>
<rect x="372.2" y="138.9" width="4" height="4" fill="#ffffff" stroke="#5078f2" stroke-width="0.9"/>
<rect x="372.2" y="408.2" width="4" height="4" fill="#ffffff" stroke="#5078f2" stroke-width="0.9"/>
<rect x="574.4" y="138.9" width="4" height="4" fill="#ffffff" stroke="#5078f2" stroke-width="0.9"/>
<rect x="574.4" y="273.2" width="4" height="4" fill="#ffffff" stroke="#5078f2" stroke-width="0.9"/>
<rect x="574.4" y="408.2" width="4" height="4" fill="#ffffff" stroke="#5078f2" stroke-width="0.9"/>
<circle cx="374" cy="275.3" r="2.3" fill="#4a70f6"/>
<circle cx="180.9" cy="150.1" r="2.7" fill="#a4b8f8" stroke="#6e8ef5" stroke-width="1"/>
<circle cx="180.9" cy="150.1" r="0.9" fill="#6e8ef5"/>
<circle cx="566.9" cy="150.1" r="2.7" fill="#a4b8f8" stroke="#6e8ef5" stroke-width="1"/>
<circle cx="566.9" cy="150.1" r="0.9" fill="#6e8ef5"/>
<circle cx="180.9" cy="401.1" r="2.7" fill="#a4b8f8" stroke="#6e8ef5" stroke-width="1"/>
<circle cx="180.9" cy="401.1" r="0.9" fill="#6e8ef5"/>
<rect x="3" y="278.2" width="39.5" height="0.8" fill="#4a4a4a"/>
<path d="M10.5,64.8 L17.5,70.9 L13.2,71.4 L10.5,74.4 Z" fill="none" stroke="#c8c8c8" stroke-width="1.2"/>
<path d="M29.5,64.3 L37.2,71.2 L32.6,71.8 L29.5,75 Z" fill="#c8c8c8"/>
<path d="M41.300000000000004,73.8 L41.300000000000004,76.0 L39.1,76.0 Z" fill="#c8c8c8"/>
<line x1="8.9" y1="89.6" x2="15.9" y2="83.1" stroke="#c8c8c8" stroke-width="1.6"/>
<rect x="10.6" y="81.1" width="1.8" height="1.8" fill="#c8c8c8"/>
<rect x="15.999999999999998" y="79.8" width="1.8" height="1.8" fill="#c8c8c8"/>
<rect x="16.700000000000003" y="83.89999999999999" width="1.8" height="1.8" fill="#c8c8c8"/>
<ellipse cx="32.4" cy="83.1" rx="5" ry="3.1" fill="none" stroke="#c8c8c8" stroke-width="1.1"/>
<path d="M29.2,85.4 Q27.6,87.2 29.6,89.2" fill="none" stroke="#c8c8c8" stroke-width="1"/>
<path d="M32.8,82.1 L39,87.7 L34.8,87.9 L33.2,90 Z" fill="#c8c8c8" stroke="#535353" stroke-width="0.6"/>
<g transform="translate(8.2,95)"><path d="M0,10 L1.5,4.8 L5.6,1.9 L8.6,4.9 L5.7,9 Z" fill="#c8c8c8"/><path d="M5.9,1.2 L7.6,-0.5 L10.6,2.5 L8.9,4.2 Z" fill="#c8c8c8"/><path d="M0.3,9.7 L4,6" stroke="#535353" stroke-width="0.7"/><circle cx="4.2" cy="5.8" r="0.8" fill="#535353"/></g>
<path d="M22.099999999999998,104.5 L22.099999999999998,106.7 L19.9,106.7 Z" fill="#c8c8c8"/>
<g transform="translate(28.5,95)"><path d="M0,10 L1.5,4.8 L5.6,1.9 L8.6,4.9 L5.7,9 Z" fill="#c8c8c8"/><path d="M5.9,1.2 L7.6,-0.5 L10.6,2.5 L8.9,4.2 Z" fill="#c8c8c8"/><path d="M0.3,9.7 L4,6" stroke="#535353" stroke-width="0.7"/><circle cx="4.2" cy="5.8" r="0.8" fill="#535353"/></g>
<path d="M27,95.3 Q29.2,96.5 27.6,99.5 Q26,103 28.8,104.8" fill="none" stroke="#c8c8c8" stroke-width="0.8"/>
<path d="M9.4,113.8 L9.4,111.6 L17.9,111.6 L17.9,113.8 M13.65,111.6 L13.65,119.4 M11.4,119.4 L15.9,119.4" fill="none" stroke="#c8c8c8" stroke-width="1.2"/>
<path d="M22.099999999999998,119.4 L22.099999999999998,121.60000000000001 L19.9,121.60000000000001 Z" fill="#c8c8c8"/>
<line x1="28.2" y1="119.4" x2="37.5" y2="111.1" stroke="#c8c8c8" stroke-width="1.2"/>
<path d="M41.400000000000006,119.4 L41.400000000000006,121.60000000000001 L39.2,121.60000000000001 Z" fill="#c8c8c8"/>
<rect x="4.8" y="123.8" width="17.4" height="13.8" rx="2" fill="#2f2f2f"/>
<rect x="8.6" y="126.5" width="10.2" height="8.8" rx="1" fill="#6c6c6c" stroke="#c8c8c8" stroke-width="1.1"/>
<path d="M21.8,134.8 L21.8,137.0 L19.6,137.0 Z" fill="#c8c8c8"/>
<line x1="37.6" y1="126.2" x2="32.4" y2="131.2" stroke="#c8c8c8" stroke-width="2"/>
<path d="M33.4,132 L31.4,130 Q28.6,132.6 27.7,135.8 Q31,135.2 33.4,132 Z" fill="#c8c8c8"/>
<path d="M41.300000000000004,135.2 L41.300000000000004,137.39999999999998 L39.1,137.39999999999998 Z" fill="#c8c8c8"/>
<circle cx="11.1" cy="146" r="4" fill="#6a6a6a" stroke="#c8c8c8" stroke-width="1"/>
<line x1="11.8" y1="150.6" x2="19.6" y2="143.3" stroke="#c8c8c8" stroke-width="2"/>
<path d="M22.099999999999998,150.4 L22.099999999999998,152.6 L19.9,152.6 Z" fill="#c8c8c8"/>
<path d="M27.9,147.2 L34.1,141 L38.5,145.4 L32.3,151.6 Z" fill="#c8c8c8"/>
<path d="M28.9,147.2 L31.1,145 L33.3,147.2 L31.1,149.4 Z" fill="#444444"/>
<path d="M41.300000000000004,150.4 L41.300000000000004,152.6 L39.1,152.6 Z" fill="#c8c8c8"/>
<path d="M10.1,158.6 A5,5 0 1 1 9,164.6" fill="none" stroke="#c8c8c8" stroke-width="1"/>
<path d="M8,157.4 L11.6,157.8 L8.6,161 Z" fill="#c8c8c8"/>
<path d="M22.099999999999998,166.2 L22.099999999999998,168.39999999999998 L19.9,168.39999999999998 Z" fill="#c8c8c8"/>
<rect x="30" y="156.8" width="8.5" height="7.6" fill="none" stroke="#c8c8c8" stroke-width="0.9"/>
<rect x="27.3" y="161.3" width="6.3" height="5.8" fill="#535353" stroke="#c8c8c8" stroke-width="0.9"/>
<path d="M31.5,163.2 L36.8,158" stroke="#c8c8c8" stroke-width="0.8"/>
<path d="M41.300000000000004,166.4 L41.300000000000004,168.6 L39.1,168.6 Z" fill="#c8c8c8"/>
<path d="M10.2,173.6 Q11.4,177.4 13.6,178.8 Q16.2,179.8 18,176.6 Q19.2,176.6 19.6,178.6" fill="none" stroke="#c8c8c8" stroke-width="1.9" stroke-linecap="round"/>
<circle cx="14.8" cy="174.4" r="1" fill="#c8c8c8"/>
<circle cx="8.4" cy="180.6" r="1.1" fill="#c8c8c8"/>
<line x1="8.4" y1="180.6" x2="12.2" y2="177.4" stroke="#c8c8c8" stroke-width="0.9"/>
<path d="M22.099999999999998,181.6 L22.099999999999998,183.79999999999998 L19.9,183.79999999999998 Z" fill="#c8c8c8"/>
<line x1="27.6" y1="180.6" x2="31.2" y2="177" stroke="#c8c8c8" stroke-width="1.1"/>
<path d="M30,175.6 L33.6,172 L36.4,174.8 L32.8,178.4 Z" fill="#c8c8c8"/>
<path d="M33.2,171.4 L34.2,170.4 L37.6,173.8 L36.6,174.8 Z" fill="#c8c8c8"/>
<path d="M41.300000000000004,181.6 L41.300000000000004,183.79999999999998 L39.1,183.79999999999998 Z" fill="#c8c8c8"/>
<path d="M8,191.5 Q7,188 10.6,187.4 Q13.4,186.6 16,188 Q18.8,189.6 17.6,192.6 Q16,196 12,195.8 Q8.6,195.6 8,191.5 Z" fill="none" stroke="#c8c8c8" stroke-width="0.9"/>
<path d="M8.5,191.4 L17.6,191.4 M12.6,187.2 L12.6,195.8" stroke="#c8c8c8" stroke-width="0.6"/>
<path d="M15.2,190.6 L20.2,195.6 L17.6,195.9 L16,198 Z" fill="#c8c8c8" stroke="#535353" stroke-width="0.5"/>
<path d="M22.099999999999998,196.8 L22.099999999999998,199.0 L19.9,199.0 Z" fill="#c8c8c8"/>
<path d="M27.6,187.6 L27.6,197.2 L38.8,197.2 Z" fill="none" stroke="#c8c8c8" stroke-width="0.9"/>
<path d="M27.6,187.6 L31.6,189.8 L31.6,197.2 M27.6,192.4 L38.8,197.2 M31.6,193.6 L36,195.4" fill="none" stroke="#c8c8c8" stroke-width="0.7"/>
<rect x="27.1" y="187.3" width="1.3" height="10.3" fill="#c8c8c8"/>
<path d="M41.300000000000004,196.8 L41.300000000000004,199.0 L39.1,199.0 Z" fill="#c8c8c8"/>
<rect x="8.2" y="203.3" width="10.4" height="9" rx="1.2" fill="#6a6a6a" stroke="#c8c8c8" stroke-width="1"/>
<path d="M9,206 Q12,204.5 13.6,207.5 Q15,210.5 18,209 M11,203.5 Q10.5,207 12.5,208.5 Q14,210 13.5,212.2 M15,203.5 Q16,206 17.8,206.2" fill="none" stroke="#c8c8c8" stroke-width="0.8"/>
<defs><linearGradient id="gr" x1="0" x2="1" y1="0" y2="0"><stop offset="0" stop-color="#222"/><stop offset="1" stop-color="#dcdcdc"/></linearGradient><linearGradient id="gr2" x1="0" x2="1" y1="0" y2="0"><stop offset="0" stop-color="#ffffff"/><stop offset="0.55" stop-color="#9a9a9a"/><stop offset="1" stop-color="#2a2a2a"/></linearGradient></defs>
<rect x="27.5" y="203.6" width="10" height="8.8" rx="1.2" fill="url(#gr)" stroke="#c8c8c8" stroke-width="0.9"/>
<path d="M8.6,227.8 L14.6,221.2 L16.4,223 L10.2,229.2 Q8.2,229.8 8.6,227.8 Z" fill="none" stroke="#c8c8c8" stroke-width="0.9"/>
<path d="M14.2,220.2 L16.6,217.8 Q18.4,217.2 18.8,219 L16.6,221.6 L17.6,222.6 L16.4,223.6 L13.4,220.6 L14.2,219.8 Z" fill="#c8c8c8"/>
<path d="M22.099999999999998,227.6 L22.099999999999998,229.79999999999998 L19.9,229.79999999999998 Z" fill="#c8c8c8"/>
<rect x="27" y="219" width="4" height="4.4" fill="#c8c8c8"/>
<circle cx="32" cy="223.2" r="2.6" fill="#7c7c7c" stroke="#c8c8c8" stroke-width="0.8"/>
<circle cx="36" cy="225.4" r="2.6" fill="none" stroke="#c8c8c8" stroke-width="0.9"/>
<rect x="13.2" y="236" width="6.6" height="7.6" rx="1" fill="#5e5e5e" stroke="#c8c8c8" stroke-width="1"/>
<rect x="15.2" y="233.8" width="2.6" height="2.2" fill="#c8c8c8"/>
<circle cx="16.5" cy="240" r="1.5" fill="none" stroke="#c8c8c8" stroke-width="0.8"/>
<rect x="8" y="234.6" width="1" height="1.2" fill="#c8c8c8"/>
<rect x="8" y="236.8" width="1" height="1.2" fill="#c8c8c8"/>
<rect x="8" y="239" width="1" height="1.2" fill="#c8c8c8"/>
<rect x="10.2" y="234.6" width="1" height="1.2" fill="#c8c8c8"/>
<rect x="10.2" y="236.8" width="1" height="1.2" fill="#c8c8c8"/>
<rect x="12.2" y="234.6" width="1" height="1.2" fill="#c8c8c8"/>
<path d="M22.099999999999998,243 L22.099999999999998,245.2 L19.9,245.2 Z" fill="#c8c8c8"/>
<path d="M27.4,233.8 L27.4,243 L38.6,243" fill="none" stroke="#c8c8c8" stroke-width="0.9"/>
<rect x="29.4" y="238.2" width="1.8" height="4.4" fill="#c8c8c8"/><rect x="32.4" y="234.4" width="1.8" height="8.2" fill="#c8c8c8"/><rect x="35.4" y="236" width="1.8" height="6.6" fill="#c8c8c8"/>
<path d="M41.300000000000004,243 L41.300000000000004,245.2 L39.1,245.2 Z" fill="#c8c8c8"/>
<path d="M9.9,251.6 L16,251.6 L18.2,253.8 L18.2,258.8 L9.9,258.8 Z" fill="#6a6a6a" stroke="#c8c8c8" stroke-width="1"/>
<path d="M9.9,248.2 L9.9,251.6 M7,251.6 L9.9,251.6" stroke="#c8c8c8" stroke-width="0.9"/>
<path d="M27.2,259.4 L28.6,256 L36.4,249.6 L38,251.2 L30.8,258 Z" fill="none" stroke="#c8c8c8" stroke-width="0.9"/>
<path d="M33.8,252.2 L36.4,249.6 L38,251.2 L35.4,253.8 Z" fill="#c8c8c8"/>
<path d="M41.300000000000004,258.6 L41.300000000000004,260.8 L39.1,260.8 Z" fill="#c8c8c8"/>
<path d="M10.6,274.4 Q8,271.2 8.2,269.6 L9.2,269.6 L11,271.2 L11,265.4 Q11.6,264.6 12.2,265.4 L12.4,269 L12.8,264.4 Q13.5,263.8 14.2,264.4 L14.2,269 L15,265 Q15.7,264.4 16.3,265 L16,269.4 L17,266.6 Q17.7,266.2 18.2,266.8 L17.4,271.6 Q16.6,274.4 15,274.8 Z" fill="#c8c8c8"/>
<path d="M22.099999999999998,273 L22.099999999999998,275.2 L19.9,275.2 Z" fill="#c8c8c8"/>
<circle cx="31.3" cy="268.2" r="3.6" fill="none" stroke="#c8c8c8" stroke-width="1"/>
<line x1="33.8" y1="270.7" x2="37.4" y2="274.3" stroke="#c8c8c8" stroke-width="1.5"/>
<rect x="15.3" y="293.1" width="23.3" height="22.9" fill="#ffffff"/>
<rect x="21.9" y="299.5" width="10.2" height="10.2" fill="#535353"/>
<line x1="15.9" y1="315.5" x2="38.2" y2="293.6" stroke="#ff0000" stroke-width="1.6"/>
<rect x="3.6" y="281.4" width="23.6" height="23.5" fill="#2c2c2c"/>
<rect x="4.6" y="282.3" width="21.6" height="21.9" fill="#fafae3"/>
<path d="M34,285.4 Q35.8,283 38.4,285.6 L38.4,288.4" fill="none" stroke="#c8c8c8" stroke-width="1"/>
<path d="M32.6,284.8 L34.8,283.2 L35,286 Z M37,287.8 L39.8,287.8 L38.4,289.6 Z" fill="#c8c8c8"/>
<rect x="6.6" y="310.2" width="4.6" height="4.6" fill="#222" stroke="#c8c8c8" stroke-width="0.8"/>
<rect x="4.2" y="308" width="4.4" height="4.4" fill="#ffffff" stroke="#333" stroke-width="0.6"/>
<rect x="4.9" y="320.6" width="36.6" height="12.3" rx="1.5" fill="#515151" stroke="#5a5a5a" stroke-width="0.5"/>
<rect x="4.9" y="321.6" width="10.9" height="11.2" rx="1.5" fill="#363636"/>
<rect x="6.3" y="323.3" width="7.7" height="7.6" fill="#fafae3" stroke="#111" stroke-width="0.9"/>
<path d="M18.6,323.2 L26.6,324 L26.6,330.4 L18.6,331.2 Z" fill="url(#gr2)" stroke="#111" stroke-width="0.9"/>
<rect x="31.3" y="323.2" width="8.2" height="7.9" fill="#ffffff" stroke="#111" stroke-width="0.9"/>
<line x1="31.6" y1="330.6" x2="39.2" y2="323.6" stroke="#ff0000" stroke-width="1.4"/>
<rect x="4.9" y="336.2" width="36.6" height="11.5" rx="1.5" fill="#4f4f4f" stroke="#595959" stroke-width="0.5"/>
<rect x="4.9" y="336.4" width="10.9" height="11.2" rx="1.5" fill="#363636"/>
<circle cx="9.4" cy="340.9" r="2.4" fill="none" stroke="#c8c8c8" stroke-width="0.8"/><rect x="10" y="341.6" width="3.4" height="3.6" fill="#c8c8c8"/>
<circle cx="21.8" cy="341" r="2.5" fill="none" stroke="#c8c8c8" stroke-width="0.8"/><rect x="23" y="342.4" width="2.6" height="2.6" fill="#c8c8c8"/>
<circle cx="33.6" cy="341.8" r="2.4" fill="none" stroke="#c8c8c8" stroke-width="0.8"/><path d="M33.6,341.8 L36,341.8 L36,343 Q35,344.2 33.6,344.2 Z" fill="#c8c8c8"/>
<rect x="16.2" y="356.6" width="8.6" height="7" fill="#5a5a5a" stroke="#c8c8c8" stroke-width="0.9"/>
<rect x="21.8" y="354" width="8" height="7" fill="#6e6e6e" stroke="#c8c8c8" stroke-width="0.9"/>
<rect x="21.8" y="354" width="8" height="1.8" fill="#c8c8c8"/>
<rect x="16.2" y="356.6" width="5.6" height="1.6" fill="#c8c8c8"/>
<circle cx="19.1" cy="379.5" r="1.1" fill="#e2e2e2"/>
<circle cx="22.7" cy="379.5" r="1.1" fill="#e2e2e2"/>
<circle cx="26.3" cy="379.5" r="1.1" fill="#e2e2e2"/>
</svg>
</body></html>
